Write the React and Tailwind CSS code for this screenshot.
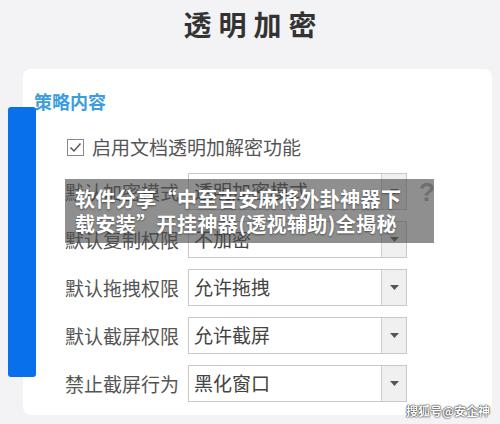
import React from "react";

const rows = [
  { label: "默认加密模式", value: "透明加密模式", help: true },
  { label: "默认复制权限", value: "不加密" },
  { label: "默认拖拽权限", value: "允许拖拽" },
  { label: "默认截屏权限", value: "允许截屏" },
  { label: "禁止截屏行为", value: "黑化窗口" },
];

function SelectBox({ value }) {
  return (
    <div className="flex h-[37px] w-[219px] border border-[#c8c8c8] bg-white">
      <div className="flex flex-1 items-center pl-[5px] text-[19px] text-[#444]">{value}</div>
      <div className="flex w-[25px] items-center justify-center border-l border-[#d0d0d0] bg-[#f0f0f0]">
        <svg width="9" height="5" viewBox="0 0 9 5">
          <path d="M0 0h9L4.5 5z" fill="#555" />
        </svg>
      </div>
    </div>
  );
}

export default function App() {
  return (
    <div className="relative h-[424px] w-[500px] overflow-hidden bg-[#f3f3f5] font-['Noto_Sans_CJK_SC',sans-serif]">
      {/* title */}
      <div className="flex h-[69px] items-start justify-center pt-[6px]">
        <h1 className="text-[28px] font-bold leading-[36px] tracking-[7px] text-[#333] pl-[7px]">透明加密</h1>
      </div>

      {/* card */}
      <div className="ml-[23px] mr-[8px] h-[346px] rounded-[8px] bg-white pt-[20px]">
        <div className="pl-[11px] text-[18px] font-bold leading-[24px] text-[#3b9ddd]">策略内容</div>

        <div className="mt-[22px] flex items-center pl-[44px]">
          <div className="flex h-[17px] w-[17px] items-center justify-center border border-[#888] bg-white">
            <svg width="13" height="11" viewBox="0 0 13 11">
              <path d="M1.5 5.5l3.5 3.5 6.5-7.5" fill="none" stroke="#555" strokeWidth="1.5" />
            </svg>
          </div>
          <span className="ml-[8px] text-[19px] leading-[24px] text-[#555]">启用文档透明加解密功能</span>
        </div>

        <div className="mt-[14px] flex flex-col gap-[11px] pl-[42px]">
          {rows.map((r) => (
            <div key={r.label} className="flex items-center">
              <div className="w-[123px] text-[19px] leading-[24px] text-[#555]">{r.label}</div>
              <SelectBox value={r.value} />
              {r.help && (
                <span className="ml-[12px] text-[26px] font-bold leading-none text-[#aaa] font-['Liberation_Sans',sans-serif]">?</span>
              )}
            </div>
          ))}
        </div>
      </div>

      {/* blue side bar */}
      <div className="absolute left-[8px] top-[107px] h-[270px] w-[28px] rounded-[3px] bg-[#0870ea]" />

      {/* caption overlay */}
      <div className="absolute left-[65px] top-[179px] h-[64px] w-[369px] bg-[rgba(75,75,75,0.62)] py-[7px] pl-[10px]">
        <p className="text-[20px] font-bold leading-[25px] tracking-[0.4px] text-white [text-shadow:0_1px_2px_rgba(0,0,0,0.45)]">
          软件分享“中至吉安麻将外卦神器下
          <br />
          载安装”开挂神器(透视辅助)全揭秘
        </p>
      </div>

      {/* watermark */}
      <div className="absolute bottom-[7px] right-[10px] text-[12px] font-bold leading-none text-white [text-shadow:0_0_2px_rgba(0,0,0,0.9),0_0_1px_rgba(0,0,0,0.9)]">
        搜狐号@安企神
      </div>
    </div>
  );
}
